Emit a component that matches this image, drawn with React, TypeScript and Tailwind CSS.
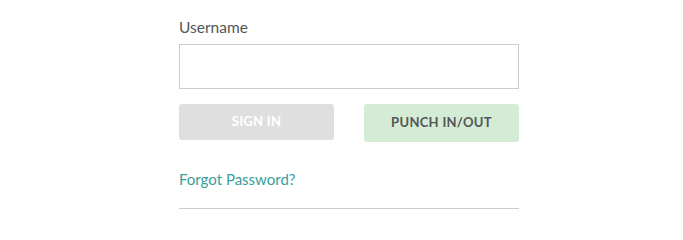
export default function App() {
	return (
		<div className="h-[210px] overflow-hidden bg-white" style={{ fontFamily: "Lato, 'Noto Sans', sans-serif" }}>
			<div className="ml-[179px] w-[340px] pt-[17px]">
				{/* Username field */}
				<label className="block text-[15.5px] leading-[20px] text-[#555555]">Username</label>
				<input
					type="text"
					className="mt-[7px] block h-[45px] w-full border border-[#cccccc] bg-white px-3 text-[15px] outline-none"
				/>

				{/* Buttons */}
				<div className="mt-[15px] flex items-start justify-between">
					<button className="h-[36px] w-[155px] rounded-[3px] bg-[#dfdfdf] text-[13px] font-bold tracking-[0.3px] text-white">
						SIGN IN
					</button>
					<button className="h-[38px] w-[155px] rounded-[3px] bg-[#d4ebd5] text-[13px] font-bold tracking-[0.3px] text-[#555555]">
						PUNCH IN/OUT
					</button>
				</div>

				<a href="#" className="mt-[27px] block text-[15px] leading-[20px] text-[#3a9e9b]">
					Forgot Password?
				</a>
				<div className="mt-[19px] h-px w-full bg-[#cccccc]" />
			</div>
		</div>
	);
}
